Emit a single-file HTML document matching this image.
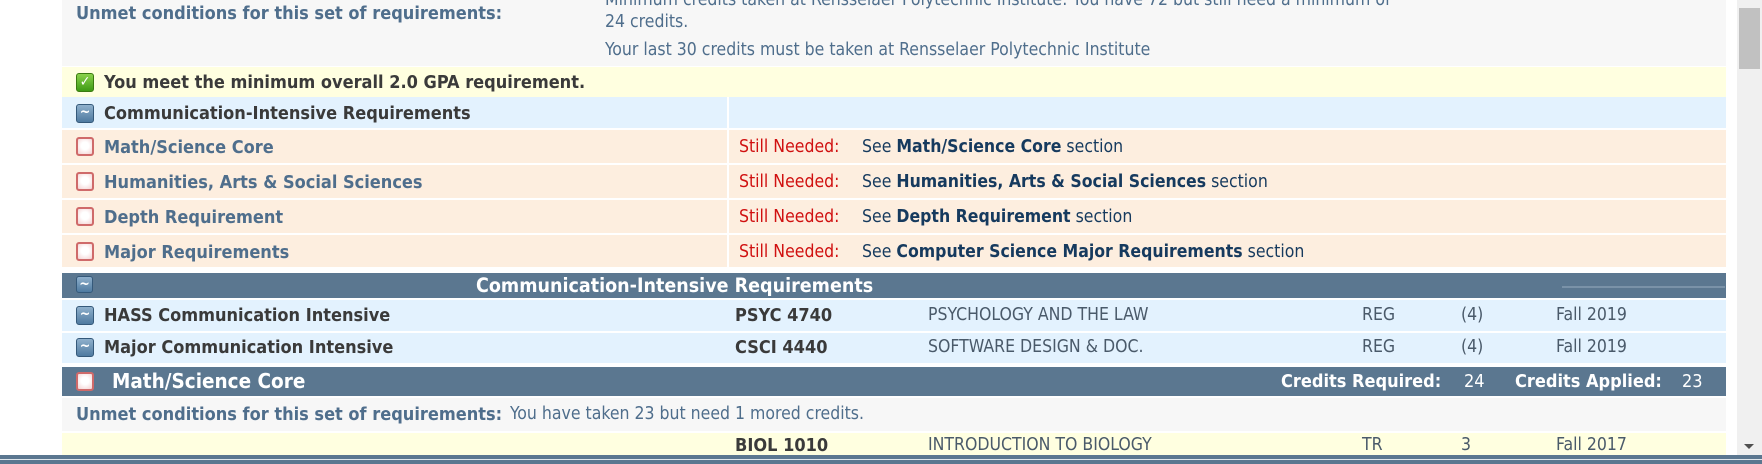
<!DOCTYPE html>
<html><head><meta charset="utf-8"><style>
*{margin:0;padding:0;box-sizing:border-box}
body{width:1762px;height:464px;overflow:hidden;background:#fff;font-family:"DejaVu Sans Condensed","DejaVu Sans","Liberation Sans",sans-serif;font-size:17.5px;position:relative}
.a{position:absolute;white-space:nowrap}
.r{position:absolute;left:62px;width:1664px}
.b{font-weight:bold}
.lab{color:#4f6e8c}
.dk{color:#3a3a3a}
.ic{position:absolute;width:18px;height:19px;border-radius:3px}
.cb{background:radial-gradient(circle at 50% 45%,#fff 35%,#f3d0d0 100%);border:2px solid #cf6a6a}
.wv{background:linear-gradient(#8fb0cc,#4f7aa0);border:1px solid #35597a;color:#fff;font-size:14px;line-height:15px;text-align:center;font-weight:bold}
.ok{background:linear-gradient(#8bd24c,#3e9a14);border:1px solid #3a7a10;color:#fff;font-size:14px;line-height:17px;text-align:center;font-weight:bold}
.red{color:#d01010}
.nv{color:#163a5e}
.g{color:#4a5a6a}
.w{color:#fff;font-weight:bold}
.h{font-size:18px}
</style></head><body>
<div class="r" style="top:0;height:66px;background:#f7f7f7"></div>
<div class="a b lab h" style="left:76px;top:3px">Unmet conditions for this set of requirements:</div>
<div class="a lab" style="left:605px;top:-10px">Minimum credits taken at Rensselaer Polytechnic Institute: You have 72 but still need a minimum of</div>
<div class="a lab" style="left:605px;top:12px">24 credits.</div>
<div class="a lab" style="left:605px;top:40px">Your last 30 credits must be taken at Rensselaer Polytechnic Institute</div>

<div class="r" style="top:67px;height:30px;background:#ffffe0"></div>
<div class="ic ok" style="left:76px;top:73px">✓</div>
<div class="a b dk h" style="left:104px;top:72px">You meet the minimum overall 2.0 GPA requirement.</div>

<div class="r" style="top:97px;height:31px;background:#e3f2fe"></div>
<div class="a" style="left:727px;top:97px;width:2px;height:31px;background:#fff"></div>
<div class="ic wv" style="left:76px;top:104px">~</div>
<div class="a b dk h" style="left:104px;top:103px">Communication-Intensive Requirements</div>

<div class="r" style="top:130px;height:33px;background:#fdeedf"></div>
<div class="r" style="top:165px;height:33px;background:#fdeedf"></div>
<div class="r" style="top:200px;height:33px;background:#fdeedf"></div>
<div class="r" style="top:235px;height:32px;background:#fdeedf"></div>
<div class="a" style="left:727px;top:130px;width:2px;height:137px;background:#fff"></div>

<div class="ic cb" style="left:76px;top:137px"></div><div class="a b lab h" style="left:104px;top:137px">Math/Science Core</div>
<div class="ic cb" style="left:76px;top:172px"></div><div class="a b lab h" style="left:104px;top:172px">Humanities, Arts &amp; Social Sciences</div>
<div class="ic cb" style="left:76px;top:207px"></div><div class="a b lab h" style="left:104px;top:207px">Depth Requirement</div>
<div class="ic cb" style="left:76px;top:242px"></div><div class="a b lab h" style="left:104px;top:242px">Major Requirements</div>

<div class="a red" style="left:739px;top:137px">Still Needed:</div><div class="a nv" style="left:862px;top:137px">See <b>Math/Science Core</b> section</div>
<div class="a red" style="left:739px;top:172px">Still Needed:</div><div class="a nv" style="left:862px;top:172px">See <b>Humanities, Arts &amp; Social Sciences</b> section</div>
<div class="a red" style="left:739px;top:207px">Still Needed:</div><div class="a nv" style="left:862px;top:207px">See <b>Depth Requirement</b> section</div>
<div class="a red" style="left:739px;top:242px">Still Needed:</div><div class="a nv" style="left:862px;top:242px">See <b>Computer Science Major Requirements</b> section</div>

<div class="r" style="top:273px;height:25px;background:#5b7790"></div>
<div class="a" style="left:1562px;top:286px;width:163px;height:2px;background:#7a92a8"></div>
<div class="ic wv" style="left:76px;top:276px;width:17px;height:17px">~</div>
<div class="a w" style="left:476px;top:274px;font-size:19.5px">Communication-Intensive Requirements</div>

<div class="r" style="top:300px;height:31px;background:#e3f2fe"></div>
<div class="r" style="top:333px;height:30px;background:#e3f2fe"></div>
<div class="ic wv" style="left:76px;top:306px">~</div><div class="a b dk h" style="left:104px;top:305px">HASS Communication Intensive</div>
<div class="ic wv" style="left:76px;top:338px">~</div><div class="a b dk h" style="left:104px;top:337px">Major Communication Intensive</div>
<div class="a b dk h" style="left:735px;top:305px">PSYC 4740</div>
<div class="a b dk h" style="left:735px;top:337px">CSCI 4440</div>
<div class="a g" style="left:928px;top:305px">PSYCHOLOGY AND THE LAW</div>
<div class="a g" style="left:928px;top:337px">SOFTWARE DESIGN &amp; DOC.</div>
<div class="a g" style="left:1362px;top:305px">REG</div><div class="a g" style="left:1461px;top:305px">(4)</div><div class="a g" style="left:1556px;top:305px">Fall 2019</div>
<div class="a g" style="left:1362px;top:337px">REG</div><div class="a g" style="left:1461px;top:337px">(4)</div><div class="a g" style="left:1556px;top:337px">Fall 2019</div>

<div class="r" style="top:367px;height:29px;background:#5b7790"></div>
<div class="ic cb" style="left:76px;top:372px"></div>
<div class="a w" style="left:112px;top:369px;font-size:20.5px">Math/Science Core</div>
<div class="a w" style="left:1281px;top:371px;font-size:18px">Credits Required:</div>
<div class="a w" style="left:1464px;top:371px;font-size:18px;font-weight:normal">24</div>
<div class="a w" style="left:1515px;top:371px;font-size:18px">Credits Applied:</div>
<div class="a w" style="left:1682px;top:371px;font-size:18px;font-weight:normal">23</div>

<div class="r" style="top:398px;height:33px;background:#f7f7f7"></div>
<div class="a b lab h" style="left:76px;top:404px">Unmet conditions for this set of requirements:</div>
<div class="a lab" style="left:510px;top:404px">You have taken 23 but need 1 mored credits.</div>

<div class="r" style="top:433px;height:24px;background:#ffffe0"></div>
<div class="a b dk h" style="left:735px;top:435px">BIOL 1010</div>
<div class="a g" style="left:928px;top:435px">INTRODUCTION TO BIOLOGY</div>
<div class="a g" style="left:1362px;top:435px">TR</div><div class="a g" style="left:1461px;top:435px">3</div><div class="a g" style="left:1556px;top:435px">Fall 2017</div>

<div class="a" style="left:1737px;top:0;width:25px;height:455px;background:#f0f0f0"></div>
<div class="a" style="left:1739px;top:8px;width:21px;height:61px;background:#c1c1c1"></div>
<div class="a" style="left:1744px;top:444px;width:0;height:0;border-left:5px solid transparent;border-right:5px solid transparent;border-top:5px solid #505050"></div>

<div class="a" style="left:0;top:455px;width:1762px;height:9px;background:#5b7790"></div>
<div class="a" style="left:0;top:459px;width:1762px;height:1px;background:#dfe6ec"></div>
</body></html>
